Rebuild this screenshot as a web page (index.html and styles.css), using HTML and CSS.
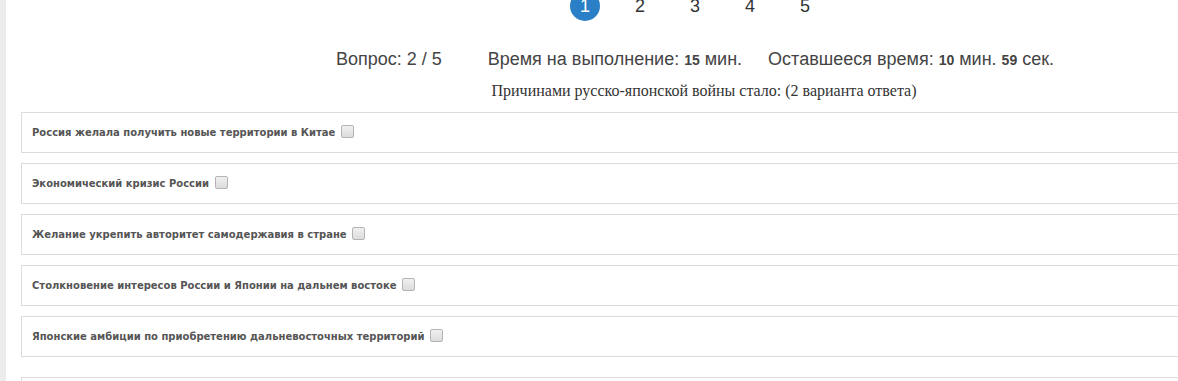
FILE: index.html
```html
<!DOCTYPE html>
<html lang="ru">
<head>
    <meta charset="UTF-8">
    <meta name="viewport" content="width=device-width, initial-scale=1.0">
    <title>Тест</title>
    <link rel="stylesheet" href="styles.css">
</head>
<body>
    <div class="page">
        <div class="side"></div>

        <div class="main">
            <div class="pages">
                <span class="page-num active">1</span>
                <span class="page-num">2</span>
                <span class="page-num">3</span>
                <span class="page-num">4</span>
                <span class="page-num">5</span>
            </div>

            <div class="info">
                <span class="info-item first">Вопрос: 2 / 5</span>
                <span class="info-item second">Время на выполнение: <b>15</b> мин.</span>
                <span class="info-item">Оставшееся время: <b>10</b> мин. <b>59</b> сек.</span>
            </div>

            <p class="question">Причинами русско-японской войны стало: (2 варианта ответа)</p>

            <div class="answers">
                <div class="answer"><label>Россия желала получить новые территории в Китае <input type="checkbox"></label></div>
                <div class="answer"><label>Экономический кризис России <input type="checkbox"></label></div>
                <div class="answer"><label>Желание укрепить авторитет самодержавия в стране <input type="checkbox"></label></div>
                <div class="answer"><label>Столкновение интересов России и Японии на дальнем востоке <input type="checkbox"></label></div>
                <div class="answer"><label>Японские амбиции по приобретению дальневосточных территорий <input type="checkbox"></label></div>
                <div class="answer last"></div>
            </div>
        </div>
    </div>
</body>
</html>
```

FILE: styles.css
```css
body {
    margin: 0;
    background: #fff;
    font-family: 'Liberation Sans', Arial, sans-serif;
    color: #333;
    overflow: hidden;
}
.page {
    display: flex;
    height: 381px;
    overflow: hidden;
}
.side {
    width: 6px;
    flex-shrink: 0;
    background: #ececec;
}
.main {
    flex-shrink: 0;
    width: 1366px;
    margin-left: 15px;
}
.pages {
    display: flex;
    justify-content: center;
    margin-top: -9px;
    padding-right: 18px;
}
.page-num {
    width: 30px;
    height: 30px;
    margin: 0 12.5px;
    border-radius: 50%;
    text-align: center;
    line-height: 30px;
    font-size: 18px;
    color: #333;
}
.page-num.active {
    background: #2a7fc6;
    color: #fff;
}
.info {
    display: flex;
    justify-content: center;
    margin-top: 26px;
    padding-right: 18px;
    font-size: 18px;
    line-height: 24px;
    color: #444;
}
.info b {
    font-size: 14px;
}
.first {
    margin-right: 46px;
}
.second {
    margin-right: 26px;
}
.question {
    margin: 9px 0 0;
    text-align: center;
    font-family: 'Liberation Serif', 'Times New Roman', serif;
    font-size: 16px;
    line-height: 20px;
    color: #333;
}
.answers {
    margin-top: 11px;
}
.answer {
    height: 39px;
    margin-bottom: 10px;
    border: 1px solid #dcdcdc;
    display: flex;
    align-items: center;
    padding-left: 10px;
}
.answer.last {
    margin-top: 20px;
}
.answer label {
    font-family: Tahoma, 'DejaVu Sans', sans-serif;
    font-weight: bold;
    font-size: 10px;
    color: #555;
}
.answer input {
    appearance: none;
    width: 13px;
    height: 13px;
    margin: 0 0 0 2px;
    vertical-align: middle;
    position: relative;
    top: -1px;
    border: 1px solid #b4b4b4;
    border-radius: 2px;
    background: linear-gradient(#f0f0f0, #dcdcdc);
}
```
